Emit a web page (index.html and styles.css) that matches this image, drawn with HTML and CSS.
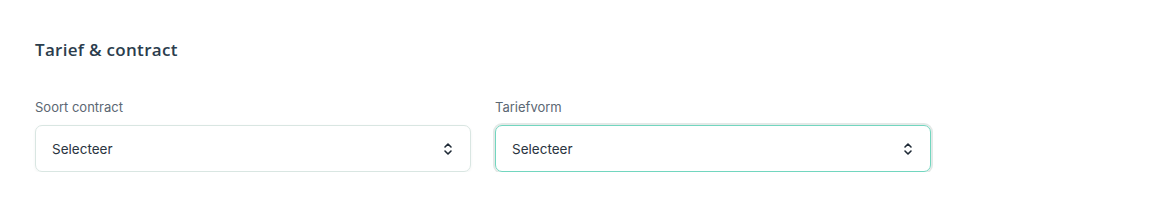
FILE: index.html
```html
<!DOCTYPE html>
<html lang="nl">
<head>
    <meta charset="UTF-8">
    <title>Tarief &amp; contract</title>
    <link rel="stylesheet" href="styles.css">
</head>
<body>
<div class="section">
    <h2 class="sectionTitle">Tarief &amp; contract</h2>
    <div class="fieldRow">
        <div class="field">
            <label class="fieldLabel">Soort contract</label>
            <div class="selectBox">
                <span>Selecteer</span>
                <svg class="chevrons" width="10" height="14" viewBox="0 0 10 14" fill="none" stroke="#1f2a36" stroke-width="1.6" stroke-linecap="round" stroke-linejoin="round">
                    <path d="M2 5 L5 2 L8 5"/>
                    <path d="M2 9 L5 12 L8 9"/>
                </svg>
            </div>
        </div>
        <div class="field">
            <label class="fieldLabel">Tariefvorm</label>
            <div class="selectBox focused">
                <span>Selecteer</span>
                <svg class="chevrons" width="10" height="14" viewBox="0 0 10 14" fill="none" stroke="#1f2a36" stroke-width="1.6" stroke-linecap="round" stroke-linejoin="round">
                    <path d="M2 5 L5 2 L8 5"/>
                    <path d="M2 9 L5 12 L8 9"/>
                </svg>
            </div>
        </div>
    </div>
</div>
</body>
</html>
```

FILE: styles.css
```css
* {
    box-sizing: border-box;
}

body {
    margin: 0;
    background: #fff;
    font-family: Inter, "Noto Sans", sans-serif;
}

.section {
    padding: 38px 35px 0 35px;
}

.sectionTitle {
    margin: 0 0 38px 0;
    font: 600 17px "Open Sans", Lato, sans-serif;
    color: #2b3d4d;
    letter-spacing: 0.3px;
}

.fieldRow {
    display: grid;
    grid-template-columns: 436px 436px;
    column-gap: 24px;
}

.fieldLabel {
    display: block;
    font-size: 13px;
    color: #5b6773;
    margin-bottom: 10px;
}

.selectBox {
    height: 47px;
    border: 1px solid #d9e6e2;
    border-radius: 7px;
    padding: 0 17px 0 16px;
    display: flex;
    align-items: center;
    justify-content: space-between;
    font-size: 13.5px;
    color: #2a3440;
    box-shadow: 0 1px 3px rgba(30, 60, 50, 0.06);
}

.selectBox.focused {
    border-color: #72d6bf;
    box-shadow: 0 0 0 2px #e3e9e7;
}

.chevrons {
    display: block;
}
```
